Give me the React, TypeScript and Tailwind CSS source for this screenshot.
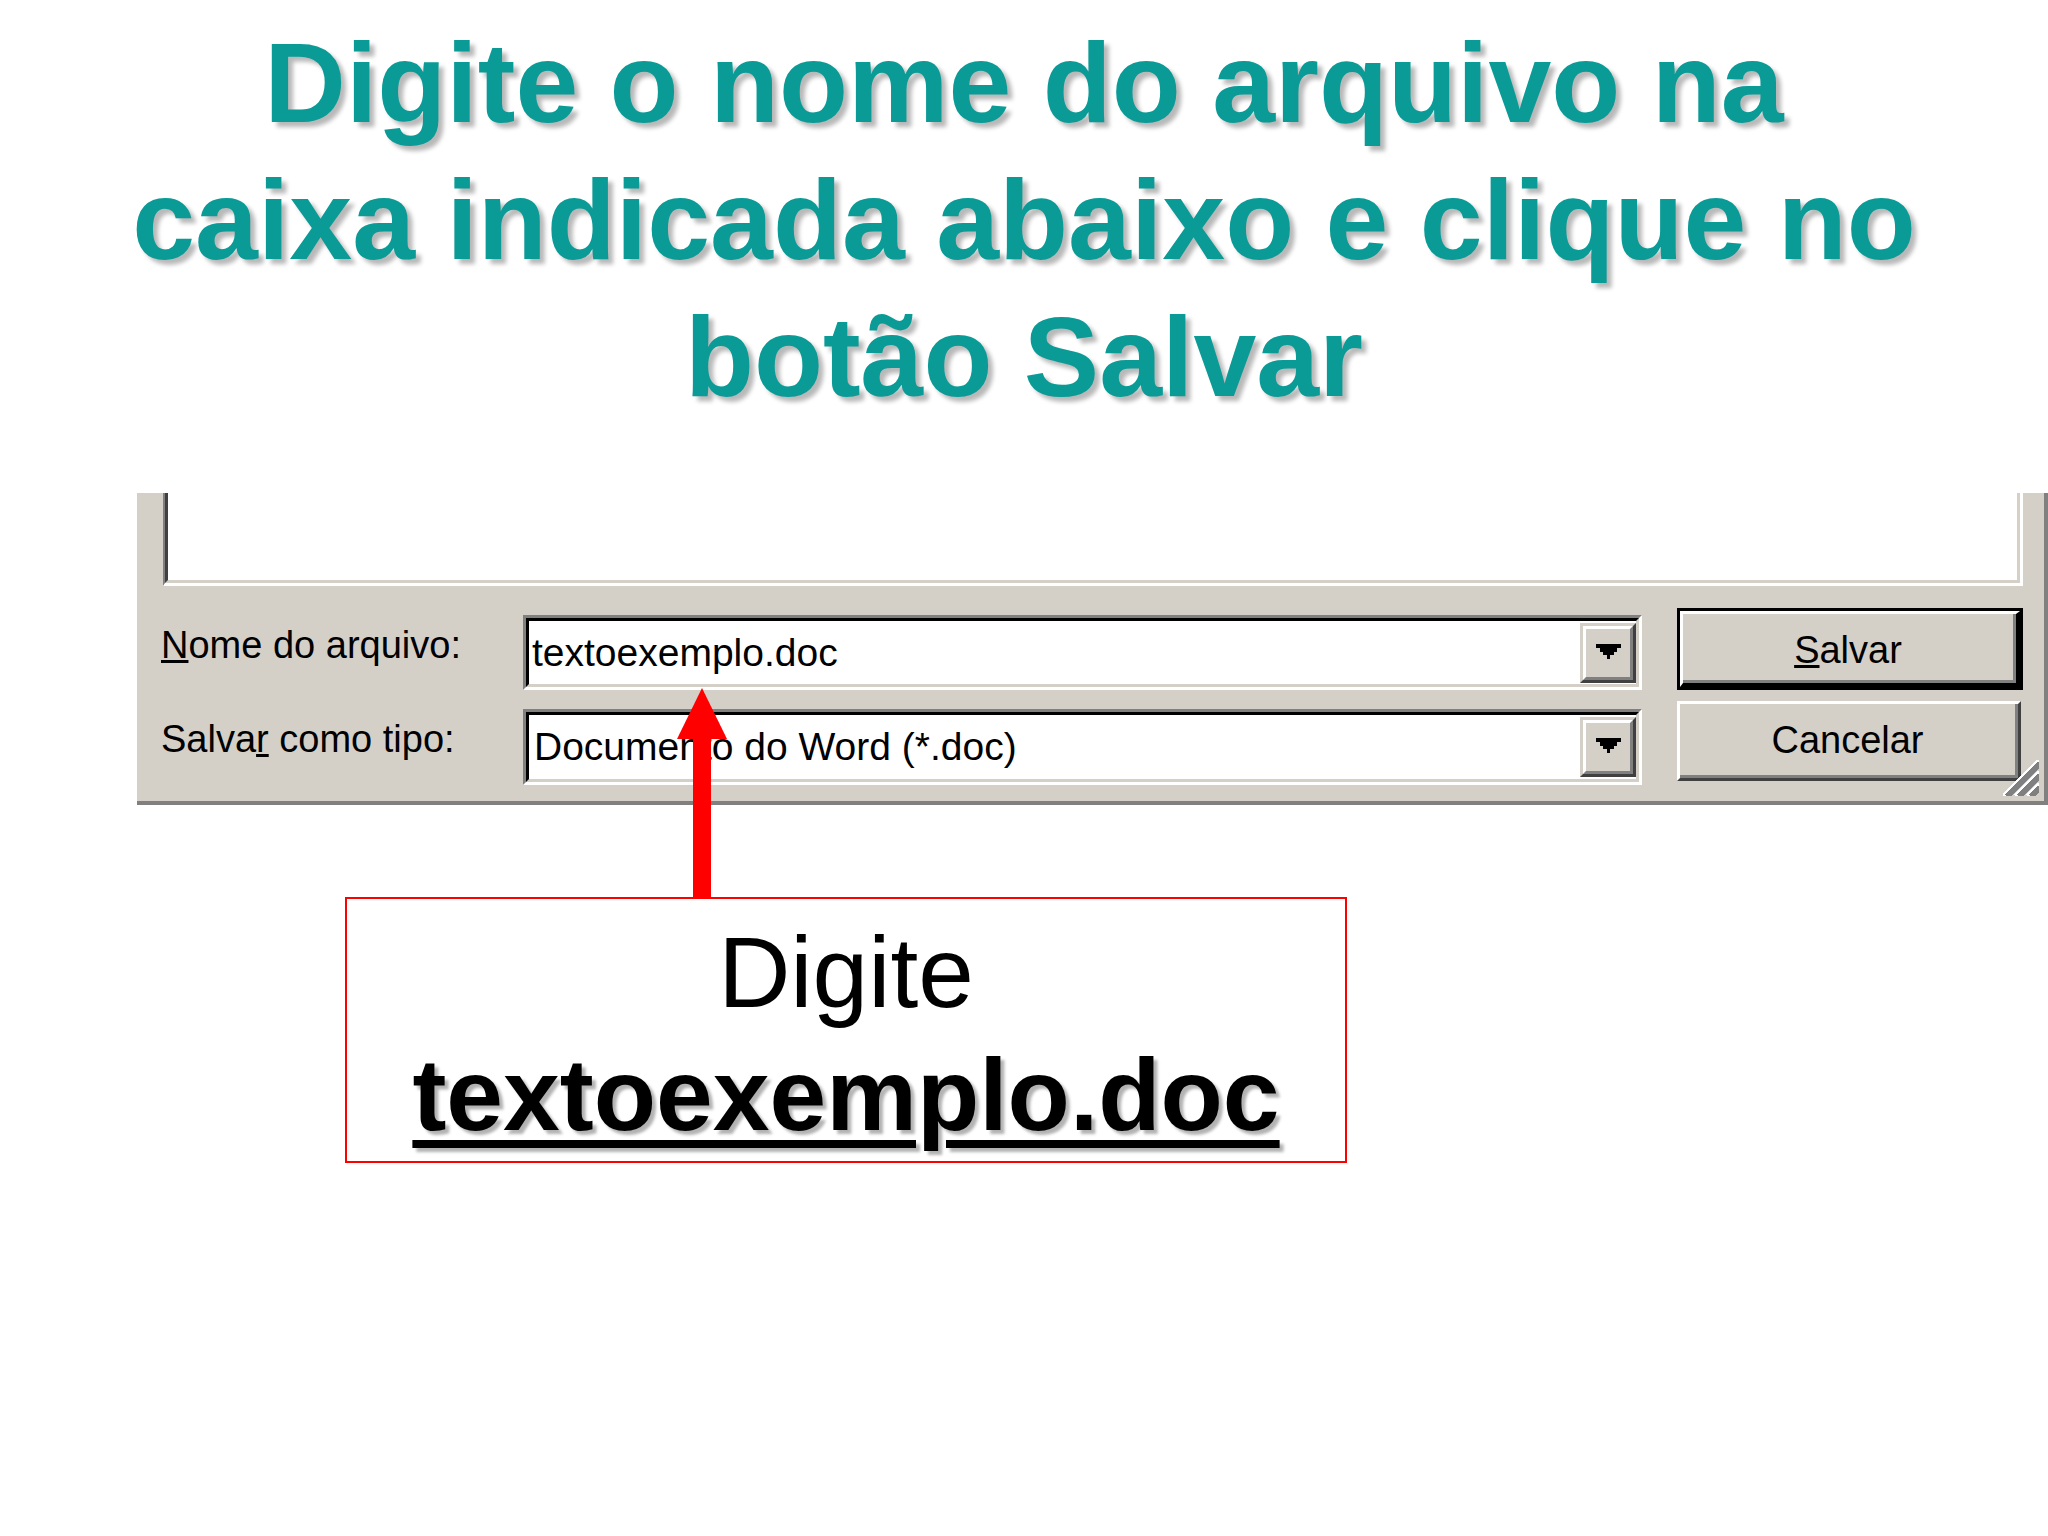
import React from "react";

function SunkenField({ children, textPad }: { children: React.ReactNode; textPad: string }) {
  return (
    <div className="h-full border-t-[3px] border-l-[3px] border-b-[3px] border-r-[3px] border-t-[#808080] border-l-[#808080] border-b-white border-r-white">
      <div className="h-full flex items-center bg-white border-t-[3px] border-l-[3px] border-b-[3px] border-r-[3px] border-t-black border-l-black border-b-[#d4d0c8] border-r-[#d4d0c8]">
        <span className={`flex-1 text-[39px] leading-[44px] text-black whitespace-nowrap ${textPad}`}>{children}</span>
        <DropButton />
      </div>
    </div>
  );
}

function DropButton() {
  return (
    <div className="w-[56px] h-[60px] border-t-[3px] border-l-[3px] border-b-[3px] border-r-[3px] border-t-[#d4d0c8] border-l-[#d4d0c8] border-b-[#404040] border-r-[#404040]">
      <div className="h-full bg-[#d4d0c8] flex items-center justify-center pb-[3px] border-t-[3px] border-l-[3px] border-b-[3px] border-r-[3px] border-t-white border-l-white border-b-[#808080] border-r-[#808080]">
        <svg width="25" height="15" viewBox="0 0 7 4" shapeRendering="crispEdges">
          <rect x="0" y="0" width="7" height="1" fill="#000" />
          <rect x="1" y="1" width="5" height="1" fill="#000" />
          <rect x="2" y="2" width="3" height="1" fill="#000" />
          <rect x="3" y="3" width="1" height="1" fill="#000" />
        </svg>
      </div>
    </div>
  );
}

function SizeGrip() {
  const offs = [0, 4, 8];
  return (
    <svg className="absolute right-[5px] bottom-[5px]" width="36" height="36" viewBox="0 0 12 12" shapeRendering="crispEdges">
      {offs.map((k) => (
        <g key={k}>
          <line x1={k} y1={12} x2={12} y2={k} stroke="#ffffff" strokeWidth="1" />
          <line x1={k + 1} y1={12} x2={12} y2={k + 1} stroke="#808080" strokeWidth="1" />
          <line x1={k + 2} y1={12} x2={12} y2={k + 2} stroke="#808080" strokeWidth="1" />
        </g>
      ))}
    </svg>
  );
}

export default function App() {
  return (
    <div className="relative w-[2048px] h-[1536px] overflow-hidden bg-white font-['Liberation_Sans',Arial,sans-serif]">
      <h1 className="pt-[15px] text-center font-bold text-[113px] leading-[137px] text-[#0a9b97] [text-shadow:5px_5px_4px_rgba(0,0,0,0.28)]">
        <span className="block">Digite o nome do arquivo na</span>
        <span className="block">caixa indicada abaixo e clique no</span>
        <span className="block">botão Salvar</span>
      </h1>

      {/* recorte do diálogo Salvar como */}
      <div className="relative mt-[67px] ml-[137px] w-[1911px] h-[312px] bg-[#d4d0c8] border-r-[4px] border-r-[#808080] border-b-[4px] border-b-[#808080]">
        <div className="ml-[26px] mr-[21px] h-[93px] border-l-[2px] border-l-[#808080] border-r-[3px] border-r-white border-b-[3px] border-b-white">
          <div className="h-full bg-white border-l-[3px] border-l-[#404040] border-r-[3px] border-r-[#d4d0c8] border-b-[3px] border-b-[#d4d0c8]" />
        </div>

        <div className="flex mt-[22px] h-[82px]">
          <div className="w-[386px] pl-[24px] mt-[15px] text-[38px] leading-[44px] text-black whitespace-nowrap">
            <u>N</u>ome do arquivo:
          </div>
          <div className="w-[1119px] h-[75px] mt-[7px]">
            <SunkenField textPad="pl-[3px]">textoexemplo.doc</SunkenField>
          </div>
          <div className="ml-[35px] w-[346px] h-[82px] border-[3px] border-black">
            <div className="h-full border-t-[3px] border-l-[3px] border-t-white border-l-white border-b-[4px] border-r-[4px] border-b-black border-r-black">
              <div className="h-full flex items-center justify-center pt-[5px] bg-[#d4d0c8] border-b-[3px] border-r-[3px] border-b-[#808080] border-r-[#808080] text-[38px] leading-[44px] text-black">
                <span>
                  <u>S</u>alvar
                </span>
              </div>
            </div>
          </div>
        </div>

        <div className="flex mt-[11px] h-[80px]">
          <div className="w-[386px] pl-[24px] mt-[16px] text-[38px] leading-[44px] text-black whitespace-nowrap">
            Salva<u>r</u> como tipo:
          </div>
          <div className="w-[1119px] h-[76px] mt-[8px]">
            <SunkenField textPad="pl-[5px]">Documento do Word (*.doc)</SunkenField>
          </div>
          <div className="ml-[35px] w-[344px] h-[80px] border-t-[3px] border-l-[3px] border-t-white border-l-white border-b-[3px] border-r-[3px] border-b-[#404040] border-r-[#404040]">
            <div className="h-full flex items-center justify-center bg-[#d4d0c8] border-b-[3px] border-r-[3px] border-b-[#808080] border-r-[#808080] text-[38px] leading-[44px] text-black">
              Cancelar
            </div>
          </div>
        </div>

        <SizeGrip />
      </div>

      <div className="mt-[92px] ml-[345px] w-[1002px] h-[266px] border-2 border-[#ff0000] text-center text-black">
        <div className="pt-[12px] text-[100px] leading-[123px]">Digite</div>
        <div className="text-[102px] leading-[123px] font-bold underline decoration-[8px] underline-offset-[10px] [text-shadow:4px_4px_3px_rgba(0,0,0,0.3)]">
          textoexemplo.doc
        </div>
      </div>

      {/* seta vermelha apontando para a caixa */}
      <svg className="absolute left-[677px] top-[688px]" width="50" height="210" viewBox="0 0 50 210">
        <polygon points="25,0 50,51 0,51" fill="#ff0000" />
        <rect x="16" y="50" width="18" height="160" fill="#ff0000" />
      </svg>
    </div>
  );
}
